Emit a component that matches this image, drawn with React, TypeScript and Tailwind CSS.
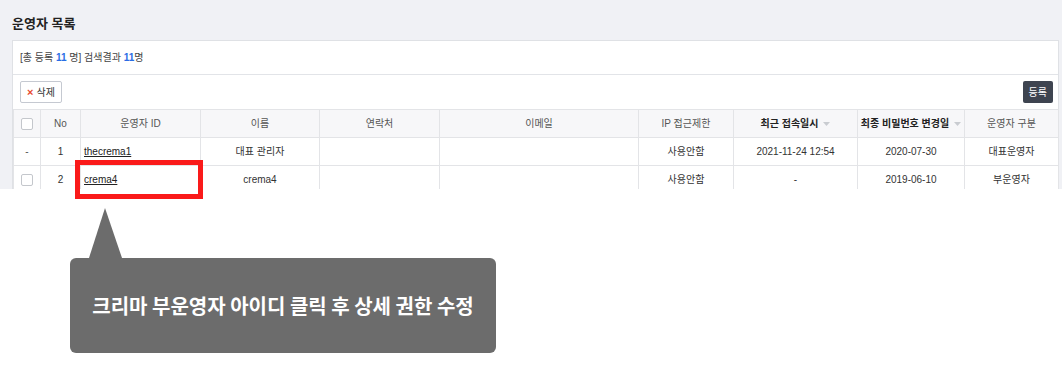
import React from "react";

const columns = [
  { label: "", width: 27 },
  { label: "No", width: 40 },
  { label: "운영자 ID", width: 120 },
  { label: "이름", width: 119 },
  { label: "연락처", width: 120 },
  { label: "이메일", width: 199 },
  { label: "IP 접근제한", width: 95 },
  { label: "최근 접속일시", width: 124, sort: true },
  { label: "최종 비밀번호 변경일", width: 107, sort: true },
  { label: "운영자 구분", width: 94 },
];

const rows = [
  { check: false, no: "1", id: "thecrema1", name: "대표 관리자", phone: "", email: "", ip: "사용안함", last: "2021-11-24 12:54", pw: "2020-07-30", role: "대표운영자" },
  { check: true, no: "2", id: "crema4", name: "crema4", phone: "", email: "", ip: "사용안함", last: "-", pw: "2019-06-10", role: "부운영자" },
];

function Checkbox() {
  return <span className="inline-block h-[12px] w-[12px] rounded-[2px] border border-[#c4c7cc] bg-white align-middle" />;
}

function Caret() {
  return (
    <svg width="7" height="4" viewBox="0 0 7 4" className="ml-[5px] inline-block align-middle">
      <path d="M0 0h7L3.5 4z" fill="#c9ccd1" />
    </svg>
  );
}

export default function App() {
  return (
    <div
      className="relative h-[375px] w-[1062px] overflow-hidden bg-white text-[#333]"
      style={{ fontFamily: '"Liberation Sans", "Noto Sans CJK KR", sans-serif' }}
    >
      {/* admin page area */}
      <div className="h-[189px] overflow-hidden bg-[#f0f1f5] pl-[12px] pr-[3px]">
        <h1 className="flex h-[40px] items-start pt-[14px] text-[13px] font-bold text-[#222]">운영자 목록</h1>
        <div className="border border-[#dfe1e5] bg-white">
          <div className="flex h-[34px] items-center border-b border-[#e2e4e8] px-[7px] text-[10px] text-[#444]">
            [총 등록&nbsp;<b className="text-[#2a6de5]">11</b>&nbsp;명] 검색결과&nbsp;<b className="text-[#2a6de5]">11</b>명
          </div>
          <div className="flex h-[34px] items-start justify-between pl-[7px] pr-[5px] pt-[6px]">
            <button className="flex h-[22px] items-center gap-[3px] rounded-[2px] border border-[#c5c9d1] bg-white px-[6px] text-[10px] text-[#333]">
              <span className="text-[11px] font-bold leading-none text-[#e8492f]">×</span>
              삭제
            </button>
            <button className="h-[22px] rounded-[2px] bg-[#3e4450] px-[6px] text-[10px] text-white">등록</button>
          </div>
          <table className="w-full table-fixed border-collapse text-[10px]">
            <colgroup>
              {columns.map((c, i) => (
                <col key={i} style={{ width: c.width }} />
              ))}
            </colgroup>
            <thead>
              <tr className="h-[28px] bg-[#f7f7f9]">
                {columns.map((c, i) => (
                  <th
                    key={i}
                    className={`border border-[#e3e4e7] text-center ${c.sort ? "font-bold text-[#222]" : "font-normal text-[#555]"}`}
                  >
                    {i === 0 ? <Checkbox /> : c.label}
                    {c.sort && <Caret />}
                  </th>
                ))}
              </tr>
            </thead>
            <tbody>
              {rows.map((r) => (
                <tr key={r.no} className="h-[28px]">
                  <td className="border border-[#e3e4e7] text-center text-[#555]">{r.check ? <Checkbox /> : "-"}</td>
                  <td className="border border-[#e3e4e7] text-center text-[#333]">{r.no}</td>
                  <td className="border border-[#e3e4e7] px-[3px] text-left">
                    <a className="text-[#222] underline">{r.id}</a>
                  </td>
                  <td className="border border-[#e3e4e7] text-center">{r.name}</td>
                  <td className="border border-[#e3e4e7] text-center">{r.phone}</td>
                  <td className="border border-[#e3e4e7] text-center">{r.email}</td>
                  <td className="border border-[#e3e4e7] text-center">{r.ip}</td>
                  <td className="border border-[#e3e4e7] text-center">{r.last}</td>
                  <td className="border border-[#e3e4e7] text-center">{r.pw}</td>
                  <td className="border border-[#e3e4e7] text-center">{r.role}</td>
                </tr>
              ))}
            </tbody>
          </table>
        </div>
      </div>

      {/* highlight box around the sub-admin id */}
      <div className="absolute left-[75px] top-[160px] h-[39px] w-[128px] border-[5px] border-[#fa1a1a]" />

      {/* callout */}
      <div className="absolute left-[70px] top-[208px] flex flex-col">
        <svg width="60" height="50" viewBox="0 0 60 50" className="block">
          <path d="M35 0L52 50H19z" fill="#6c6c6c" />
        </svg>
        <div
          className="flex h-[95px] w-[426px] items-center justify-center rounded-[6px] bg-[#6c6c6c] text-[20px] font-bold text-white"
          style={{ fontFamily: '"Noto Sans CJK KR", sans-serif' }}
        >
          크리마 부운영자 아이디 클릭 후 상세 권한 수정
        </div>
      </div>
    </div>
  );
}
